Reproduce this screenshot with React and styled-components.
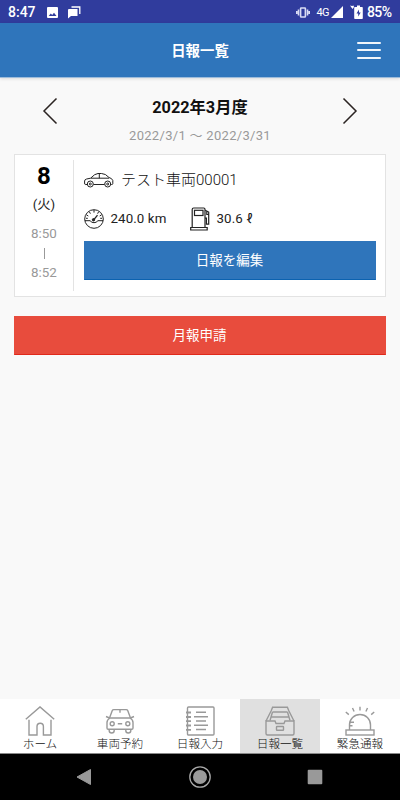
import styled, { createGlobalStyle } from 'styled-components';

const tabs = [
  { id: 'home', label: 'ホーム' },
  { id: 'reserve', label: '車両予約' },
  { id: 'input', label: '日報入力' },
  { id: 'list', label: '日報一覧' },
  { id: 'alert', label: '緊急通報' },
];

const tabIcons = {
  home: (
    <>
      <path d="M.8 13.200 15 .900l14.200 12.300" />
      <path d="M4 13.800V29h8v-8.500a3.200 3.200 0 0 1 6.400 0V29H26V13.800" />
    </>
  ),
  reserve: (
    <>
      <path d="M4.500 12 7.300 4.600Q7.700 3.600 8.800 3.600h12.400q1.100 0 1.500 1L25.500 12M15 3.600v3.200" />
      <path d="M5 12h20q3 1.600 3 4.500V22q0 1.200-1.200 1.200H3.200Q2 23.200 2 22v-5.500Q2 13.600 5 12Z" />
      <path d="M4.500 12 1 10.500M25.500 12 29 10.500M12.800 17.800h4.400" />
      <circle cx="7.200" cy="17.800" r="2" />
      <circle cx="22.800" cy="17.800" r="2" />
      <path d="M4.200 23.500v1a2.500 2.500 0 0 0 5 0v-1M20.800 23.500v1a2.500 2.500 0 0 0 5 0v-1" />
    </>
  ),
  input: (
    <>
      <rect x="2.500" y="1" width="26.500" height="28" rx="1" />
      <path d="M11 6.200h10M9 10.800h14M11 15h10M9 19.200h14M11 23.500h10" />
      <path d="M1 6.500h5M1 11h5M1 15.200h5M1 19.500h5M1 23.800h5" strokeWidth="1.800" />
    </>
  ),
  list: (
    <>
      <path d="M1 15v12.500Q1 29 2.500 29h25q1.500 0 1.500-1.500V15h-9l-1 2.500h-8L10 15Z" />
      <path d="M1 15 6.200 4.800 7.600 1.200h14.800l1.400 3.600L29 15" />
      <path d="M7.500 6h15M5.500 11h19M7.500 6l-2.500 8.500M22.500 6l2.500 8.500" />
      <rect x="11.500" y="20.500" width="7" height="3.800" rx=".6" />
    </>
  ),
  alert: (
    <>
      <rect x="1" y="24" width="28" height="5" />
      <path d="M4.500 24v-5a10.500 10.500 0 0 1 21 0v5" />
      <path d="M4.500 16.200h4.500M4.500 19.800h3M.8 6l3 2.600M7.500 2l1.600 3.500M15 .8v3.700M22.500 2l-1.600 3.500M29.200 6l-3 2.600" />
    </>
  ),
};

const CarIcon = () => (
  <svg width="30" height="16" viewBox="0 0 30 16" fill="none" stroke="#222" strokeWidth="1">
    <path d="M3 12.500H1.300Q.6 12.500.6 11V9q0-1.500 2-2l4-.8Q11 1.500 14 1.500h3.500q4 0 7.500 4 3 .7 3.800 3v3.200q0 .8-1.200.8H27M9.500 12.500h11" />
    <path d="M6.800 6.200H25M15.300 1.500v4.700" />
    <circle cx="6.300" cy="12" r="3" />
    <circle cx="6.300" cy="12" r="1" />
    <circle cx="23.700" cy="12" r="3" />
    <circle cx="23.700" cy="12" r="1" />
  </svg>
);

const MeterIcon = () => (
  <svg width="20" height="20" viewBox="0 0 20 20" fill="none" stroke="#222" strokeWidth="1">
    <circle cx="10" cy="10" r="9.300" />
    <path d="M.8 11.700h5.500q.7 2 3.700 2t3.700-2h5.500M10 1v2.600M5.400 2.800l1 1.900M14.600 2.800l-1 1.900M2.300 5.800l2 1.200M17.700 5.800l-2 1.200M2 9.300h1.800M16.200 9.300H18" />
    <path d="m9.700 10.800 3.800-4.600" strokeWidth="1.300" />
    <circle cx="9.500" cy="10.800" r="1.200" fill="#222" />
  </svg>
);

const PumpIcon = () => (
  <svg width="20" height="24" viewBox="0 0 20 24" fill="none" stroke="#222" strokeWidth="1.200">
    <path d="M2.200 20.500v-18Q2.200 1 3.700 1h10Q15 1 15 2.500v18M.7 23v-2.500h16.500V23Z" />
    <rect x="4.500" y="3.300" width="8.500" height="5.200" />
    <path d="M15.200 3.200 18.700 5v12.200h-2.300v-6H15M16.800 4v3.500h1.900" />
  </svg>
);

const PictureIcon = () => (
  <svg width="11" height="11" viewBox="0 0 11 11">
    <path fill="#fff" fillRule="evenodd" d="M1 0h9q1 0 1 1v9q0 1-1 1H1q-1 0-1-1V1q0-1 1-1Zm.7 9h7.800L7 5.700 5.200 8 3.800 6.400Z" />
  </svg>
);

const ChatIcon = () => (
  <svg width="13" height="13" viewBox="0 0 13 13">
    <path d="M1 3h8.500v7H3L0 12.500V4q0-1 1-1Z" fill="#fff" />
    <path d="M3.500 1h8.300v7" fill="none" stroke="#fff" strokeWidth="1.300" />
  </svg>
);

const VibrateIcon = () => (
  <svg width="14" height="11" viewBox="0 0 14 11" fill="none" stroke="#d9dcf4" strokeWidth="1.600">
    <rect x="4.600" y="1" width="4.800" height="9" rx=".6" />
    <path d="M2.500 2.500v6M11.500 2.500v6M.8 4v3M13.200 4v3" />
  </svg>
);

const SignalIcon = () => (
  <svg width="12" height="12" viewBox="0 0 12 12">
    <path d="M12 0v12H0Z" fill="#fff" />
  </svg>
);

const BatteryIcon = () => (
  <svg width="13" height="14" viewBox="0 0 13 14">
    <path d="M5 2h2V.5h3V2h2q.8 0 .8.800v10.400q0 .8-.8.800H5q-.8 0-.8-.800V2.800Q4.200 2 5 2Z" fill="#fff" />
    <path d="M9 4.500 6.500 8.500h1.700v3l2.500-4H9Z" fill="#303c9d" />
    <path d="M0 .5 2 1l1.500-.5L4 2 2.500 4Z" fill="#fff" />
  </svg>
);

const App = () => {
  return (
    <>
      <GlobalStyle />
      <Screen>
        <StatusBar>
          <Clock>8:47</Clock>
          <PictureIcon />
          <ChatIcon />
          <StatusRight>
            <VibrateIcon />
            <Network>4G</Network>
            <SignalIcon />
            <BatteryIcon />
            <Battery>85%</Battery>
          </StatusRight>
        </StatusBar>

        <Header>
          <span />
          <Title>日報一覧</Title>
          <MenuButton aria-label="menu">
            <i />
            <i />
            <i />
          </MenuButton>
        </Header>

        <Content>
          <MonthNav>
            <Arrow aria-label="prev">
              <svg width="16" height="28" viewBox="0 0 16 28">
                <path d="M14.500 1.500 2 14l12.500 12.500" />
              </svg>
            </Arrow>
            <MonthText>
              <Month>2022年3月度</Month>
              <Period>2022/3/1 ～ 2022/3/31</Period>
            </MonthText>
            <Arrow aria-label="next">
              <svg width="16" height="28" viewBox="0 0 16 28">
                <path d="M1.500 1.500 14 14 1.500 26.500" />
              </svg>
            </Arrow>
          </MonthNav>

          <Card>
            <DateColumn>
              <Day>8</Day>
              <Weekday>(火)</Weekday>
              <Time>8:50</Time>
              <TimeBar />
              <Time>8:52</Time>
            </DateColumn>
            <Detail>
              <Vehicle>
                <CarIcon />
                <VehicleName>テスト車両00001</VehicleName>
              </Vehicle>
              <Stats>
                <Stat $width={106}>
                  <MeterIcon />
                  <span>240.0 km</span>
                </Stat>
                <Stat>
                  <PumpIcon />
                  <span>30.6 ℓ</span>
                </Stat>
              </Stats>
              <Button $color="#2f75bb" $edge="#0c62b0">日報を編集</Button>
            </Detail>
          </Card>

          <Button $color="#e84c3d" $edge="#e0291b">月報申請</Button>
        </Content>

        <TabBar>
          {tabs.map((tab) => (
            <Tab key={tab.id} $active={tab.id === 'list'}>
              <svg width="30" height="30" viewBox="0 0 30 30">
                {tabIcons[tab.id]}
              </svg>
              <span>{tab.label}</span>
            </Tab>
          ))}
        </TabBar>

        <SystemNav>
          <svg width="16" height="18" viewBox="0 0 16 18">
            <path d="M14.500 1.500v15L1 9Z" fill="#999" stroke="#999" strokeLinejoin="round" />
          </svg>
          <svg width="22" height="22" viewBox="0 0 22 22">
            <circle cx="11" cy="11" r="10.200" fill="none" stroke="#aaa" strokeWidth="1.300" />
            <circle cx="11" cy="11" r="7" fill="#9b9b9b" />
          </svg>
          <svg width="16" height="16" viewBox="0 0 16 16">
            <rect x=".7" y=".7" width="14.600" height="14.600" rx="1" fill="#999" />
          </svg>
        </SystemNav>
      </Screen>
    </>
  );
};

const GlobalStyle = createGlobalStyle`
  * {
    box-sizing: border-box;
  }

  body {
    margin: 0;
    font-family: Roboto, "Noto Sans CJK JP", sans-serif;
    color: #222;
  }

  svg {
    display: block;
    flex-shrink: 0;
  }

  button {
    font-family: inherit;
    border: none;
    background: none;
    padding: 0;
  }
`;

const Screen = styled.div`
  width: 400px;
  height: 800px;
  display: flex;
  flex-direction: column;
  background: #f9f9f9;
  overflow: hidden;
`;

const StatusBar = styled.div`
  height: 23px;
  flex-shrink: 0;
  display: flex;
  align-items: center;
  padding: 1px 7px 0 8px;
  background: #303c9d;
  color: #fff;

  svg + svg {
    margin-left: 10px;
  }
`;

const Clock = styled.span`
  width: 39px;
  font-size: 14px;
  font-weight: 500;
  line-height: 22px;
`;

const StatusRight = styled.div`
  display: flex;
  align-items: center;
  margin-left: auto;

  svg + svg {
    margin-left: 7px;
  }
`;

const Network = styled.span`
  font-size: 11px;
  letter-spacing: -0.6px;
  margin: 0 2px 0 7px;
`;

const Battery = styled.span`
  width: 26px;
  margin-left: 4px;
  font-size: 14px;
  font-weight: 500;
  letter-spacing: -0.6px;
`;

const Header = styled.header`
  height: 55px;
  flex-shrink: 0;
  display: grid;
  grid-template-columns: 1fr auto 1fr;
  align-items: center;
  padding: 0 19px;
  background: #2f75bb;
  border-bottom: 1px solid #9dbcdb;
  box-shadow: 0 1px 3px rgba(0, 0, 0, 0.12);
`;

const Title = styled.h1`
  margin: -2px 0 0;
  color: #fff;
  font-size: 14.4px;
  font-weight: 700;
`;

const MenuButton = styled.button`
  justify-self: end;
  width: 24px;
  height: 17px;
  display: flex;
  flex-direction: column;
  justify-content: space-between;

  i {
    height: 2px;
    border-radius: 1px;
    background: #f2f6fb;
  }
`;

const Content = styled.main`
  flex: 1;
  padding: 16px 14px 0;
`;

const MonthNav = styled.div`
  height: 60px;
  display: flex;
  justify-content: space-between;
  padding: 3px 28px 0;
`;

const Arrow = styled.button`
  height: 28px;

  path {
    fill: none;
    stroke: #2b2422;
    stroke-width: 1.5;
  }
`;

const MonthText = styled.div`
  margin-top: -1px;
  text-align: center;
`;

const Month = styled.div`
  color: #111;
  font-size: 16.3px;
  font-weight: 700;
  line-height: 24px;
`;

const Period = styled.div`
  margin-top: 5px;
  color: #999;
  font-size: 13px;
  line-height: 22px;
  letter-spacing: 0.3px;
`;

const Card = styled.section`
  height: 143px;
  display: flex;
  margin-bottom: 19px;
  padding: 5px 9px 5px 0;
  background: #fff;
  border: 1px solid #e3e3e3;
`;

const DateColumn = styled.div`
  width: 59px;
  display: flex;
  flex-direction: column;
  align-items: center;
  border-right: 1px solid #e3e3e3;
`;

const Day = styled.div`
  color: #000;
  font-size: 24px;
  font-weight: 700;
  line-height: 32px;
`;

const Weekday = styled.div`
  margin: 1px 0 7px;
  font-size: 13.3px;
  line-height: 24px;
`;

const Time = styled.div`
  color: #999;
  font-size: 13.4px;
  line-height: 20px;
`;

const TimeBar = styled.div`
  width: 1px;
  height: 11px;
  margin: 4px 0;
  background: #999;
`;

const Detail = styled.div`
  flex: 1;
  padding-left: 10px;
`;

const Vehicle = styled.div`
  height: 39px;
  display: flex;
  align-items: center;
`;

const VehicleName = styled.span`
  margin: -2px 0 0 7px;
  color: #111;
  font-size: 15px;
  font-weight: 300;
`;

const Stats = styled.div`
  height: 42px;
  display: flex;
  font-size: 13.3px;
`;

const Stat = styled.div`
  width: ${props => (props.$width ? `${props.$width}px` : 'auto')};
  height: 39px;
  display: flex;
  align-items: center;
  gap: 6.5px;
  letter-spacing: 0.1px;
`;

const Button = styled.button`
  display: block;
  width: 100%;
  height: 39px;
  padding: 0 1px 3px 0;
  background: ${props => props.$color};
  border: 1px solid ${props => props.$color};
  border-bottom-color: ${props => props.$edge};
  color: #fff;
  font-size: 13.5px;
`;

const TabBar = styled.nav`
  height: 55px;
  flex-shrink: 0;
  display: grid;
  grid-template-columns: repeat(5, 1fr);
  background: #fff;
  border-bottom: 1px solid #888;
`;

const Tab = styled.div`
  display: flex;
  flex-direction: column;
  align-items: center;
  padding-top: 7px;
  background: ${props => (props.$active ? '#e0e0e0' : '#fff')};
  color: #111;
  font-size: 11.6px;
  font-weight: 300;
  line-height: 17px;

  svg {
    fill: none;
    stroke: #999;
    stroke-width: 1.4;
  }
`;

const SystemNav = styled.div`
  height: 46px;
  flex-shrink: 0;
  display: flex;
  align-items: center;
  justify-content: space-between;
  padding: 0 77px 1px 76px;
  background: #000;
`;

export default App;
